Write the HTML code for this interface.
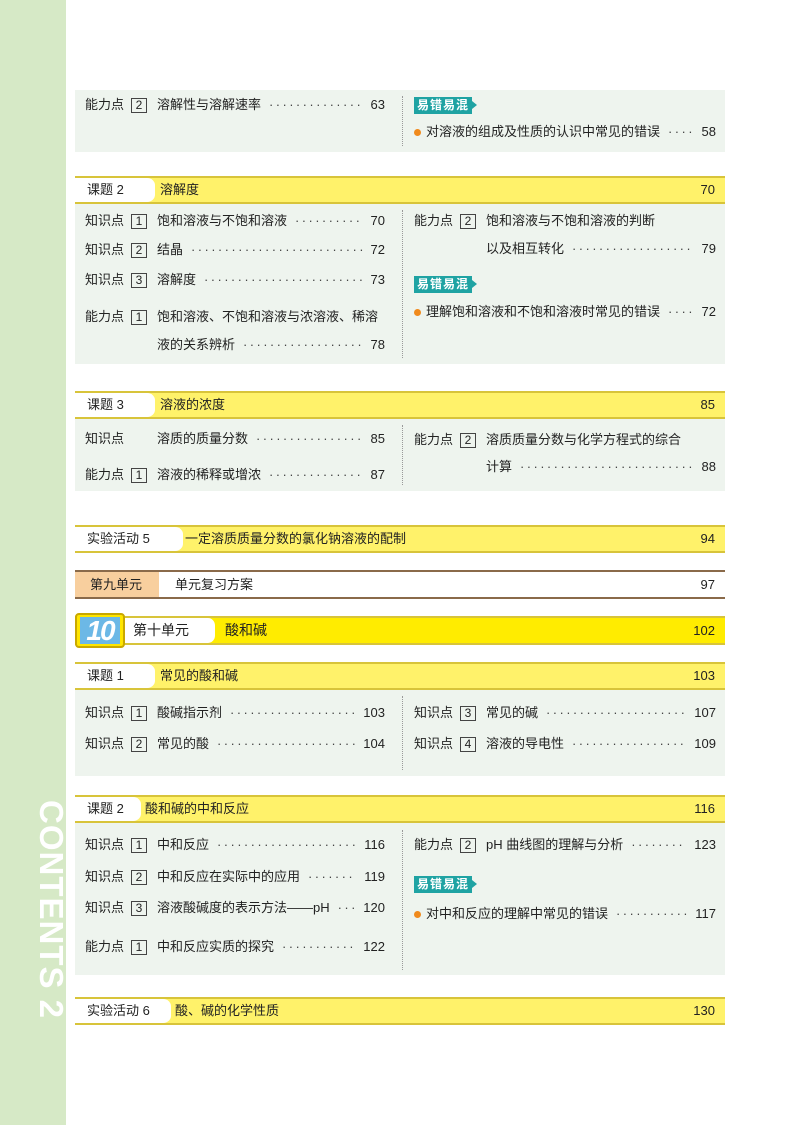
<!DOCTYPE html>
<html><head><meta charset="utf-8"><style>
*{margin:0;padding:0;box-sizing:border-box}
body{width:800px;height:1125px;position:relative;background:#fff;font-family:"Liberation Sans","Noto Sans CJK SC",sans-serif;font-size:13px;color:#222;overflow:hidden}
.side{position:absolute;left:0;top:0;width:66px;height:1125px;background:#d6e9c6}
.ct{position:absolute;left:68px;top:800px;transform-origin:0 0;transform:rotate(90deg);color:#fff;font-size:33px;font-weight:bold;letter-spacing:1px;white-space:nowrap;line-height:1}
.panel{position:absolute;left:75px;width:650px;background:#eef4ee}
.sep{position:absolute;left:402px;border-left:1px dotted #999}
.hd{position:absolute;left:75px;width:650px;height:28px;border-top:2px solid #d8c43a;border-bottom:2px solid #d8c43a;background:#fff26a}
.hd .lab{position:absolute;left:0;top:0;height:24px;background:#fff;line-height:24px;padding-left:12px}
.hd .lab:after{content:"";position:absolute;right:-8px;top:0;width:16px;height:24px;background:#fff;border-radius:0 50% 50% 0/0 30% 30% 0}
.hd .t{position:absolute;top:0;line-height:24px}
.hd .n{position:absolute;right:10px;top:0;line-height:24px}
.r{position:absolute;display:flex;align-items:center;height:18px;line-height:18px;white-space:nowrap}
.r .k{width:46px}
.bx{display:inline-block;width:16px;height:15px;border:1px solid #444;line-height:13px;text-align:center;font-size:12px;margin-right:10px}
.r .d{flex:1;overflow:hidden;color:#444;margin:0 8px;letter-spacing:2.4px}
.r .d:before{content:"··················································································"}
.tag{position:absolute;background:#1fa3a3;color:#fff;font-weight:bold;font-size:12px;height:17px;line-height:17px;padding:0 3px;letter-spacing:1px}
.tag:after{content:"";position:absolute;right:-5px;top:4px;border-left:5px solid #1fa3a3;border-top:4px solid transparent;border-bottom:4px solid transparent}
.dot{display:inline-block;width:7px;height:7px;border-radius:50%;background:#f08a1c;margin-right:5px}
</style></head><body>
<div class="side"></div>
<div class="ct">CONTENTS 2</div>

<div class="panel" style="top:90px;height:62px"></div>
<div class="sep" style="top:96px;height:50px"></div>
<div class="r" style="left:85px;top:96px;width:300px"><span class="k">能力点</span><span class="bx">2</span>溶解性与溶解速率<span class="d"></span>63</div>
<div class="tag" style="left:414px;top:97px">易错易混</div>
<div class="r" style="left:414px;top:123px;width:302px"><span class="dot"></span>对溶液的组成及性质的认识中常见的错误<span class="d"></span>58</div>

<div class="hd" style="top:176px"><div class="lab" style="width:72px">课题 2</div><div class="t" style="left:85px">溶解度</div><div class="n">70</div></div>
<div class="panel" style="top:204px;height:160px"></div>
<div class="sep" style="top:210px;height:148px"></div>
<div class="r" style="left:85px;top:212px;width:300px"><span class="k">知识点</span><span class="bx">1</span>饱和溶液与不饱和溶液<span class="d"></span>70</div>
<div class="r" style="left:85px;top:241px;width:300px"><span class="k">知识点</span><span class="bx">2</span>结晶<span class="d"></span>72</div>
<div class="r" style="left:85px;top:271px;width:300px"><span class="k">知识点</span><span class="bx">3</span>溶解度<span class="d"></span>73</div>
<div class="r" style="left:85px;top:308px;width:305px"><span class="k">能力点</span><span class="bx">1</span>饱和溶液、不饱和溶液与浓溶液、稀溶</div>
<div class="r" style="left:157px;top:336px;width:228px">液的关系辨析<span class="d"></span>78</div>
<div class="r" style="left:414px;top:212px;width:302px"><span class="k">能力点</span><span class="bx">2</span>饱和溶液与不饱和溶液的判断</div>
<div class="r" style="left:486px;top:240px;width:230px">以及相互转化<span class="d"></span>79</div>
<div class="tag" style="left:414px;top:276px">易错易混</div>
<div class="r" style="left:414px;top:303px;width:302px"><span class="dot"></span>理解饱和溶液和不饱和溶液时常见的错误<span class="d"></span>72</div>

<div class="hd" style="top:391px"><div class="lab" style="width:72px">课题 3</div><div class="t" style="left:85px">溶液的浓度</div><div class="n">85</div></div>
<div class="panel" style="top:419px;height:72px"></div>
<div class="sep" style="top:425px;height:60px"></div>
<div class="r" style="left:85px;top:430px;width:300px"><span class="k">知识点</span><span style="width:26px"></span>溶质的质量分数<span class="d"></span>85</div>
<div class="r" style="left:85px;top:466px;width:300px"><span class="k">能力点</span><span class="bx">1</span>溶液的稀释或增浓<span class="d"></span>87</div>
<div class="r" style="left:414px;top:431px;width:302px"><span class="k">能力点</span><span class="bx">2</span>溶质质量分数与化学方程式的综合</div>
<div class="r" style="left:486px;top:458px;width:230px">计算<span class="d"></span>88</div>

<div class="hd" style="top:525px"><div class="lab" style="width:100px">实验活动 5</div><div class="t" style="left:110px">一定溶质质量分数的氯化钠溶液的配制</div><div class="n">94</div></div>

<div style="position:absolute;left:75px;top:570px;width:650px;height:29px;border-top:2px solid #8a6a4a;border-bottom:2px solid #8a6a4a;background:#fff">
<div style="position:absolute;left:0;top:0;width:84px;height:25px;background:#f8cf9e;line-height:25px;padding-left:15px">第九单元</div>
<div style="position:absolute;left:100px;top:0;line-height:25px">单元复习方案</div>
<div style="position:absolute;right:10px;top:0;line-height:25px">97</div></div>

<div style="position:absolute;left:75px;top:616px;width:650px;height:29px;border-top:2px solid #d8c43a;border-bottom:2px solid #d8c43a;background:#ffec00">
<div style="position:absolute;left:48px;top:0;width:80px;height:25px;background:#fff;line-height:25px;padding-left:10px;font-size:14px">第十单元</div>
<div style="position:absolute;left:126px;top:0;width:14px;height:25px;background:#fff;border-radius:0 50% 50% 0/0 30% 30% 0"></div>
<div style="position:absolute;left:150px;top:0;line-height:25px;font-size:14px">酸和碱</div>
<div style="position:absolute;right:10px;top:0;line-height:25px">102</div></div>
<div style="position:absolute;left:75px;top:613px;width:50px;height:35px;background:#ffe600;border:2px solid #c9a800;border-radius:4px"></div>
<div style="position:absolute;left:80px;top:617px;width:40px;height:27px;background:#6cb8e6;color:#fff;font-style:italic;font-weight:bold;font-size:28px;line-height:27px;text-align:center;letter-spacing:-2px">10</div>

<div class="hd" style="top:662px"><div class="lab" style="width:72px">课题 1</div><div class="t" style="left:85px">常见的酸和碱</div><div class="n">103</div></div>
<div class="panel" style="top:690px;height:86px"></div>
<div class="sep" style="top:696px;height:74px"></div>
<div class="r" style="left:85px;top:704px;width:300px"><span class="k">知识点</span><span class="bx">1</span>酸碱指示剂<span class="d"></span>103</div>
<div class="r" style="left:85px;top:735px;width:300px"><span class="k">知识点</span><span class="bx">2</span>常见的酸<span class="d"></span>104</div>
<div class="r" style="left:414px;top:704px;width:302px"><span class="k">知识点</span><span class="bx">3</span>常见的碱<span class="d"></span>107</div>
<div class="r" style="left:414px;top:735px;width:302px"><span class="k">知识点</span><span class="bx">4</span>溶液的导电性<span class="d"></span>109</div>

<div class="hd" style="top:795px"><div class="lab" style="width:58px">课题 2</div><div class="t" style="left:70px">酸和碱的中和反应</div><div class="n">116</div></div>
<div class="panel" style="top:823px;height:152px"></div>
<div class="sep" style="top:830px;height:140px"></div>
<div class="r" style="left:85px;top:836px;width:300px"><span class="k">知识点</span><span class="bx">1</span>中和反应<span class="d"></span>116</div>
<div class="r" style="left:85px;top:868px;width:300px"><span class="k">知识点</span><span class="bx">2</span>中和反应在实际中的应用<span class="d"></span>119</div>
<div class="r" style="left:85px;top:899px;width:300px"><span class="k">知识点</span><span class="bx">3</span>溶液酸碱度的表示方法——pH<span class="d"></span>120</div>
<div class="r" style="left:85px;top:938px;width:300px"><span class="k">能力点</span><span class="bx">1</span>中和反应实质的探究<span class="d"></span>122</div>
<div class="r" style="left:414px;top:836px;width:302px"><span class="k">能力点</span><span class="bx">2</span>pH 曲线图的理解与分析<span class="d"></span>123</div>
<div class="tag" style="left:414px;top:876px">易错易混</div>
<div class="r" style="left:414px;top:905px;width:302px"><span class="dot"></span>对中和反应的理解中常见的错误<span class="d"></span>117</div>

<div class="hd" style="top:997px"><div class="lab" style="width:88px">实验活动 6</div><div class="t" style="left:100px">酸、碱的化学性质</div><div class="n">130</div></div>
</body></html>
